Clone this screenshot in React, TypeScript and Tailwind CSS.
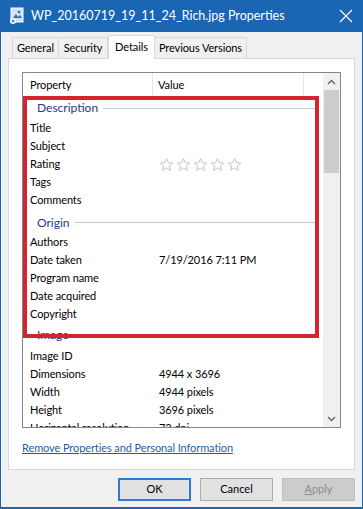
import React from "react";

const font = { fontFamily: 'Lato, "Liberation Sans", sans-serif' };

function Star() {
  return (
    <svg width="15" height="15" viewBox="0 0 24 24" className="shrink-0">
      <path
        d="M12 2.5l2.9 6.6 7.1.6-5.4 4.7 1.6 7-6.2-3.8-6.2 3.8 1.6-7L2 9.7l7.1-.6z"
        fill="none"
        stroke="#bdbdbd"
        strokeWidth="1.4"
        strokeLinejoin="round"
      />
    </svg>
  );
}

function Row({ label, value, stars }: { label: string; value?: string; stars?: boolean }) {
  return (
    <div className="flex h-[18px] shrink-0 items-center text-[11px] tracking-[-0.1px] text-black">
      <div className="w-[136px] shrink-0 pl-[7px] whitespace-nowrap">{label}</div>
      {stars ? (
        <div className="flex gap-[2px] pt-[1px]">
          <Star />
          <Star />
          <Star />
          <Star />
          <Star />
        </div>
      ) : (
        <div className="whitespace-nowrap">{value}</div>
      )}
    </div>
  );
}

function Group({ label, kind }: { label: string; kind: "first" | "mid" | "low" }) {
  const cls =
    kind === "first"
      ? "flex h-[22px] shrink-0 items-center pl-[14px]"
      : kind === "mid"
        ? "flex h-[24px] shrink-0 items-center pt-[3px] pl-[14px]"
        : "flex h-[24px] shrink-0 items-center pb-[1px] pl-[14px]";
  return (
    <div className={cls}>
      <span className="text-[12px] text-[#1e3a8a]">{label}</span>
      <div className="ml-[5px] mr-[8px] h-px flex-1 bg-[#c3cbdc]" />
    </div>
  );
}

export default function App() {
  return (
    <div className="flex h-[509px] w-[363px] flex-col bg-[#1b66b2] px-px pb-[2px]" style={font}>
      {/* title bar */}
      <div className="flex h-[32px] shrink-0 items-center text-white">
        <svg width="16" height="18" viewBox="0 0 16 18" className="ml-[8px]">
          <rect x="2" y="1" width="12" height="14" fill="#cfe3f6" stroke="#ffffff" strokeWidth="1" />
          <path d="M4 11l3-4 2 3 2-2 2 3z" fill="#2a6fb5" />
          <circle cx="10" cy="5" r="1.3" fill="#2a6fb5" />
          <circle cx="4" cy="14" r="3" fill="#ffffff" />
          <path d="M2.5 14h3M4 12.5v3" stroke="#1b66b2" strokeWidth="1" />
        </svg>
        <span className="ml-[6px] whitespace-nowrap text-[12.5px]">WP_20160719_19_11_24_Rich.jpg Properties</span>
        <svg width="14" height="14" viewBox="0 0 14 14" className="ml-auto mr-[9px]">
          <path d="M1 1l12 12M13 1L1 13" stroke="#ffffff" strokeWidth="1.3" />
        </svg>
      </div>

      <div className="flex flex-1 flex-col bg-[#f0f0f0]">
        {/* tabs */}
        <div className="relative z-10 ml-[11px] flex h-[26px] items-end whitespace-nowrap text-[11px] tracking-[-0.1px] text-black">
          <div className="flex h-[21px] w-[47px] items-center justify-center border border-b-0 border-[#d9d9d9]">General</div>
          <div className="flex h-[21px] w-[49px] items-center justify-center border border-b-0 border-l-0 border-[#d9d9d9]">Security</div>
          <div className="-mb-px flex h-[24px] w-[47px] items-start justify-center border border-b-0 border-[#d9d9d9] bg-white pt-[3px]">Details</div>
          <div className="flex h-[21px] w-[92px] items-center justify-center border border-b-0 border-l-0 border-[#d9d9d9]">Previous Versions</div>
        </div>

        {/* panel */}
        <div className="mx-[7px] flex h-[412px] flex-col border border-[#d9d9d9] bg-white px-[13px] pt-[13px]">
          <div className="relative flex h-[356px] border border-[#828790] bg-white">
            <div className="flex flex-1 flex-col overflow-hidden">
              <div className="flex h-[24px] shrink-0 text-[11px] tracking-[-0.1px] text-black">
                <div className="flex w-[130px] items-center border-r border-[#e5e5e5] pl-[7px]">Property</div>
                <div className="flex w-[151px] items-center border-r border-[#e5e5e5] pl-[5px]">Value</div>
              </div>
              <Group label="Description" kind="first" />
              <Row label="Title" />
              <Row label="Subject" />
              <Row label="Rating" stars />
              <Row label="Tags" />
              <Row label="Comments" />
              <Group label="Origin" kind="mid" />
              <Row label="Authors" />
              <Row label="Date taken" value="7/19/2016 7:11 PM" />
              <Row label="Program name" />
              <Row label="Date acquired" />
              <Row label="Copyright" />
              <Group label="Image" kind="low" />
              <Row label="Image ID" />
              <Row label="Dimensions" value="4944 x 3696" />
              <Row label="Width" value="4944 pixels" />
              <Row label="Height" value="3696 pixels" />
              <Row label="Horizontal resolution" value="72 dpi" />
            </div>
            {/* scrollbar */}
            <div className="flex w-[17px] shrink-0 flex-col bg-[#f0f0f0]">
              <div className="flex h-[17px] items-center justify-center">
                <svg width="9" height="6" viewBox="0 0 9 6">
                  <path d="M1 5l3.5-3.5L8 5" fill="none" stroke="#606060" strokeWidth="1.3" />
                </svg>
              </div>
              <div className="mx-[1px] h-[83px] bg-[#cdcdcd]" />
              <div className="flex-1" />
              <div className="flex h-[17px] items-center justify-center">
                <svg width="9" height="6" viewBox="0 0 9 6">
                  <path d="M1 1l3.5 3.5L8 1" fill="none" stroke="#606060" strokeWidth="1.3" />
                </svg>
              </div>
            </div>
            {/* red annotation box */}
            <div className="absolute left-0 top-[23px] h-[242px] w-[296px] border-[4px] border-[#d42430]" />
          </div>
          <div className="mt-[12px] text-[11px] tracking-[-0.1px] text-[#1c5fa8] underline">
            Remove Properties and Personal Information
          </div>
        </div>

        {/* buttons */}
        <div className="mr-[7px] mt-[8px] flex justify-end gap-[9px] text-[11px]">
          <div className="flex h-[23px] w-[73px] items-center justify-center border-2 border-[#2f7bd0] bg-[#e1e1e1] text-black">OK</div>
          <div className="flex h-[23px] w-[73px] items-center justify-center border border-[#adadad] bg-[#e1e1e1] text-black">Cancel</div>
          <div className="flex h-[23px] w-[73px] items-center justify-center border border-[#bfbfbf] bg-[#cccccc] text-[#8c8c8c]">
            <span>
              <span className="underline">A</span>pply
            </span>
          </div>
        </div>
      </div>
    </div>
  );
}
